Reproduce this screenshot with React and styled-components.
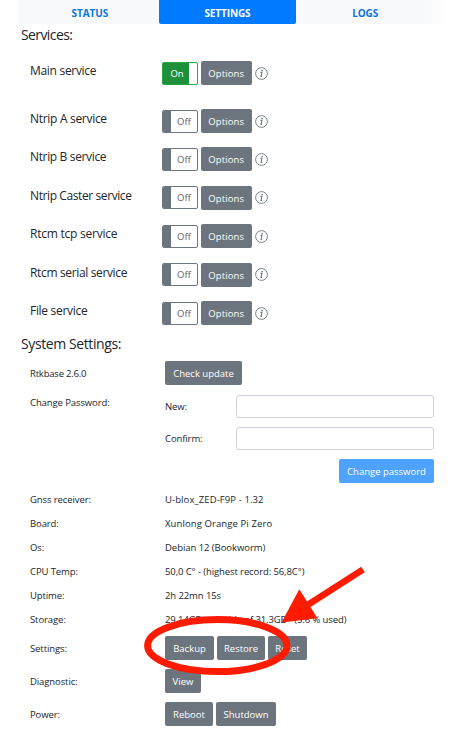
import styled, { createGlobalStyle } from 'styled-components';

const GlobalStyle = createGlobalStyle`
  * {
    box-sizing: border-box;
  }
  body {
    margin: 0;
    background: #fff;
    color: #212529;
    font-family: 'Open Sans', 'Noto Sans', sans-serif;
    overflow: hidden;
  }
`;

const Page = styled.div`
  position: relative;
  width: 454px;
  height: 740px;
  overflow: hidden;
`;

const Tabs = styled.nav`
  display: grid;
  grid-template-columns: repeat(3, 1fr);
  height: 24px;
  margin: 0 11px 0 18px;
  padding: 0 9px 0 3px;
  background: linear-gradient(90deg, #f8f9fa 95%, #fdfdfe);
`;

const Tab = styled.a`
  display: flex;
  align-items: center;
  justify-content: center;
  padding-top: 1px;
  border-radius: 0 0 2px 2px;
  font-size: 10px;
  font-weight: 700;
  letter-spacing: -0.1px;
  color: ${p => (p.$active ? '#fff' : '#0a74dc')};
  background: ${p => (p.$active ? '#007bff' : 'transparent')};
`;

const Title = styled.h4`
  height: ${p => p.$height}px;
  margin: 0;
  padding-left: 21px;
  font-size: 14px;
  font-weight: 400;
  line-height: ${p => p.$line}px;
  letter-spacing: ${p => p.$spacing};
`;

const ServiceRow = styled.div`
  display: grid;
  grid-template-columns: 132px auto;
  align-items: center;
  height: 38.4px;
  padding-left: 30px;
  margin-bottom: ${p => (p.$main ? '9.6px' : '0')};
`;

const ServiceName = styled.span`
  font-size: 12px;
  line-height: 16px;
  padding-bottom: 4px;
  white-space: nowrap;
  letter-spacing: ${p => p.$spacing};
`;

const Controls = styled.div`
  display: flex;
  align-items: center;
`;

const Toggle = styled.div`
  display: flex;
  flex-direction: ${p => (p.$on ? 'row' : 'row-reverse')};
  width: 36px;
  height: 23px;
  margin-right: 2.5px;
  overflow: hidden;
  border: 1px solid ${p => (p.$on ? '#28a745' : '#6c757d')};
  border-radius: 2px;
  background: ${p => (p.$on ? '#1e8f3a' : '#fff')};
  color: ${p => (p.$on ? '#fff' : '#5d646b')};
  font-size: 9.5px;
  line-height: 22px;
`;

const ToggleText = styled.span`
  flex: 1;
  text-align: center;
  padding-left: ${p => (p.$on ? '2px' : '0')};
`;

const Handle = styled.span`
  width: 8px;
  background: ${p => (p.$on ? '#fff' : '#6c757d')};
`;

const Button = styled.button`
  flex: none;
  width: ${p => p.$width}px;
  height: 24px;
  padding: 0;
  border: 0;
  border-radius: 2px;
  background: ${p => (p.$primary ? '#4da3ff' : '#6c757d')};
  color: #fff;
  font-family: inherit;
  font-size: 9.5px;
  line-height: 25px;
  letter-spacing: ${p => p.$spacing || '0'};
  white-space: nowrap;
`;

const InfoIcon = styled.svg`
  width: 13px;
  height: 13px;
  margin-left: 2.5px;
`;

const Row = styled.div`
  display: grid;
  grid-template-columns: 135px auto;
  align-items: center;
  height: ${p => p.$height}px;
  padding-left: 30px;
`;

const Label = styled.span`
  font-size: 9.5px;
  line-height: 14px;
  padding-top: 1px;
  white-space: nowrap;
  letter-spacing: ${p => p.$spacing || '-0.1px'};
`;

const Buttons = styled.div`
  display: flex;
  gap: 3px;
`;

const Password = styled.div`
  display: grid;
  grid-template-columns: 135px 71px 198px;
  grid-template-rows: 33px 32px 33px;
  align-items: center;
  height: 98px;
  padding-left: 30px;
`;

const PasswordTitle = styled(Label)`
  padding-bottom: 8px;
`;

const FieldLabel = styled(Label)`
  grid-column: 2;
  padding-top: 1px;
`;

const Input = styled.input`
  width: 198px;
  height: 23px;
  padding: 0 6px;
  border: 1px solid #ced4da;
  border-radius: 3px;
  background: #fff;
`;

const Submit = styled.div`
  grid-column: 3;
  display: flex;
  justify-content: flex-end;
`;

const Annotation = styled.svg`
  position: absolute;
  left: 0;
  top: 0;
  width: 454px;
  height: 740px;
  pointer-events: none;
`;

const services = [
  { name: 'Main service', on: true, spacing: '-0.3px' },
  { name: 'Ntrip A service', spacing: '-0.3px' },
  { name: 'Ntrip B service', spacing: '-0.35px' },
  { name: 'Ntrip Caster service', spacing: '-0.4px' },
  { name: 'Rtcm tcp service', spacing: '-0.23px' },
  { name: 'Rtcm serial service', spacing: '-0.35px' },
  { name: 'File service', spacing: '-0.3px' },
];

const infos = [
  { label: 'Gnss receiver:', value: 'U-blox_ZED-F9P - 1.32', spacing: '0.1px' },
  { label: 'Board:', value: 'Xunlong Orange Pi Zero', spacing: '0.1px' },
  { label: 'Os:', value: 'Debian 12 (Bookworm)', spacing: '-0.05px' },
  { label: 'CPU Temp:', value: '50,0 C° - (highest record: 56,8C°)' },
  { label: 'Uptime:', value: '2h 22mn 15s' },
  { label: 'Storage:', value: '29.14GB available of 31.3GB - (5.6 % used)' },
];

const actions = [
  {
    label: 'Settings:',
    buttons: [
      { text: 'Backup', width: 49 },
      { text: 'Restore', width: 48 },
      { text: 'Reset', width: 39 },
    ],
  },
  { label: 'Diagnostic:', buttons: [{ text: 'View', width: 36 }] },
  {
    label: 'Power:',
    buttons: [
      { text: 'Reboot', width: 48 },
      { text: 'Shutdown', width: 60 },
    ],
  },
];

const Info = () => (
  <InfoIcon viewBox="0 0 13 13" fill="none" stroke="#6c757d">
    <circle cx="6.5" cy="6.5" r="5.9" strokeWidth="0.9" />
    <path d="M5.5 5.4H6.9L6.1 9.5H7.1" strokeWidth="1.1" />
    <circle cx="7.1" cy="3.6" r="0.8" fill="#6c757d" stroke="none" />
  </InfoIcon>
);

const Service = ({ name, on, spacing }) => (
  <ServiceRow $main={on}>
    <ServiceName $spacing={spacing}>{name}</ServiceName>
    <Controls>
      <Toggle $on={on}>
        <ToggleText $on={on}>{on ? 'On' : 'Off'}</ToggleText>
        <Handle $on={on} />
      </Toggle>
      <Button type="button" $width={51.5} $spacing="0.1px">
        Options
      </Button>
      <Info />
    </Controls>
  </ServiceRow>
);

const App = () => (
  <Page>
    <GlobalStyle />
    <Tabs>
      <Tab>STATUS</Tab>
      <Tab $active>SETTINGS</Tab>
      <Tab>LOGS</Tab>
    </Tabs>
    <Title $height={29.9} $line={21} $spacing="-0.6px">
      Services:
    </Title>
    {services.map(s => (
      <Service key={s.name} {...s} />
    ))}
    <Title $height={24.6} $line={24} $spacing="-0.4px">
      System Settings:
    </Title>
    <Row $height={33}>
      <Label $spacing="-0.2px">Rtkbase 2.6.0</Label>
      <Buttons>
        <Button type="button" $width={77}>
          Check update
        </Button>
      </Buttons>
    </Row>
    <Password>
      <PasswordTitle>Change Password:</PasswordTitle>
      <FieldLabel>New:</FieldLabel>
      <Input type="password" aria-label="New" />
      <FieldLabel>Confirm:</FieldLabel>
      <Input type="password" aria-label="Confirm" />
      <Submit>
        <Button type="button" $width={95} $primary>
          Change password
        </Button>
      </Submit>
    </Password>
    {infos.map(i => (
      <Row key={i.label} $height={24}>
        <Label>{i.label}</Label>
        <Label $spacing={i.spacing}>{i.value}</Label>
      </Row>
    ))}
    {actions.map(a => (
      <Row key={a.label} $height={33}>
        <Label>{a.label}</Label>
        <Buttons>
          {a.buttons.map(b => (
            <Button key={b.text} type="button" $width={b.width}>
              {b.text}
            </Button>
          ))}
        </Buttons>
      </Row>
    ))}
    <Annotation viewBox="0 0 454 740">
      <ellipse
        cx="217.3"
        cy="645.6"
        rx="69.7"
        ry="26"
        fill="none"
        stroke="#fe1b00"
        strokeWidth="7"
      />
      <path d="M363 569.5L306 606" stroke="#fe1b00" strokeWidth="6.5" />
      <path d="M281.5 622.5L299.3 589.3L317.5 618.3Z" fill="#fe1b00" />
    </Annotation>
  </Page>
);

export default App;
